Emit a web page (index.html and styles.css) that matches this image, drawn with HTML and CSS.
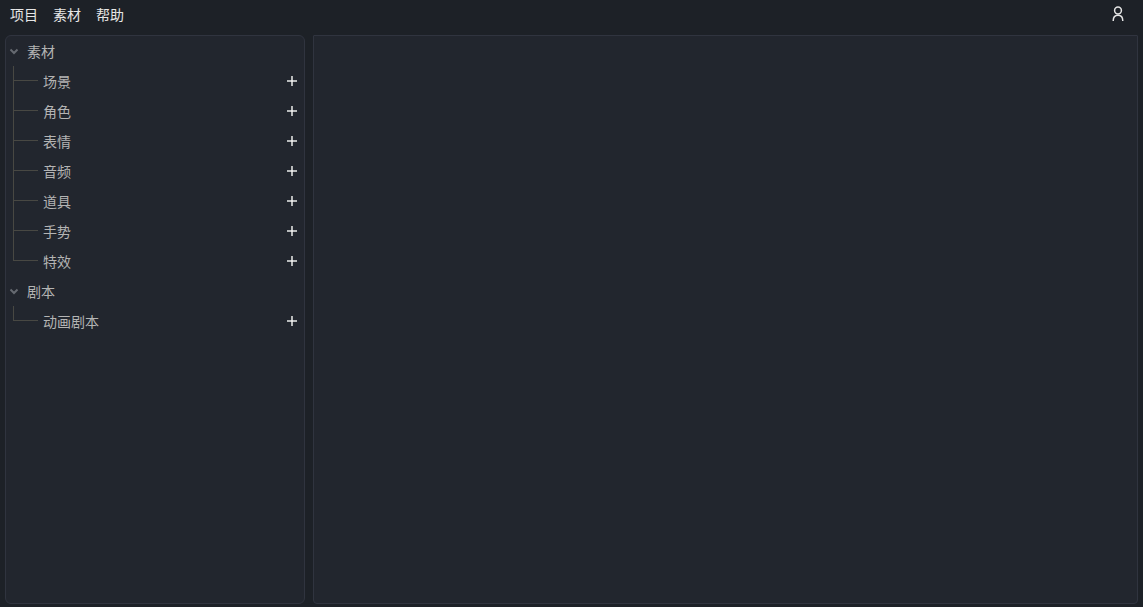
FILE: index.html
```
<!DOCTYPE html>
<html lang="zh-CN">
<head>
  <meta charset="UTF-8" />
  <meta name="viewport" content="width=device-width, initial-scale=1" />
  <title>动画剧本</title>
  <link rel="stylesheet" href="styles.css">
</head>
<body>

  <header class="topbar">
    <nav class="menu">
      <button type="button">项目</button>
      <button type="button">素材</button>
      <button type="button">帮助</button>
    </nav>
    <button type="button" class="user-btn" aria-label="用户">
      <svg width="14" height="16" viewBox="0 0 14 16" fill="none" stroke="currentColor" stroke-width="1.5">
        <circle cx="7" cy="4.5" r="3.4" />
        <path d="M2.200 15c0-3.800 1.800-5.700 4.800-5.700s4.800 1.900 4.800 5.700" />
      </svg>
    </button>
  </header>

  <div class="workspace">
    <aside class="sidebar">
      <section>
        <button type="button" class="group-title">
          <svg class="arrow" width="10" height="8" viewBox="0 0 10 8"><path d="M1.500 2.500L5 6l3.500-3.500" /></svg>
          素材
        </button>
        <ul class="tree">
          <li><span>场景</span><button type="button" class="add-btn" aria-label="添加场景"></button></li>
          <li><span>角色</span><button type="button" class="add-btn" aria-label="添加角色"></button></li>
          <li><span>表情</span><button type="button" class="add-btn" aria-label="添加表情"></button></li>
          <li><span>音频</span><button type="button" class="add-btn" aria-label="添加音频"></button></li>
          <li><span>道具</span><button type="button" class="add-btn" aria-label="添加道具"></button></li>
          <li><span>手势</span><button type="button" class="add-btn" aria-label="添加手势"></button></li>
          <li><span>特效</span><button type="button" class="add-btn" aria-label="添加特效"></button></li>
        </ul>
      </section>
      <section>
        <button type="button" class="group-title">
          <svg class="arrow" width="10" height="8" viewBox="0 0 10 8"><path d="M1.500 2.500L5 6l3.500-3.500" /></svg>
          剧本
        </button>
        <ul class="tree">
          <li><span>动画剧本</span><button type="button" class="add-btn" aria-label="添加动画剧本"></button></li>
        </ul>
      </section>
    </aside>
    <main class="canvas"></main>
  </div>

</body>
</html>
```
FILE: styles.css
```
*, *::before, *::after { box-sizing: border-box; }
body {
  margin: 0;
  height: 100vh;
  display: flex;
  flex-direction: column;
  background: #1d2127;
  color: #e6e6e6;
  font-family: "Noto Sans CJK SC", sans-serif;
  font-size: 14px;
  line-height: 20px;
}
button {
  padding: 0;
  border: none;
  background: none;
  color: inherit;
  font: inherit;
  cursor: pointer;
}

.topbar {
  display: flex;
  justify-content: space-between;
  align-items: center;
  height: 35px;
  padding: 0 18px 7px 10px;
}
.menu { display: flex; gap: 15px; }
.user-btn { display: flex; }

.workspace {
  flex: 1;
  display: flex;
  gap: 8px;
  min-height: 0;
  padding: 0 5px 3px;
}
.sidebar, .canvas {
  background: #22262e;
  border: 1px solid #30343f;
}
.sidebar {
  flex: 0 0 300px;
  border-radius: 6px;
  color: #b4b4b4;
  overflow: auto;
}
.canvas {
  flex: 1;
  border-radius: 1px 1px 4px 4px;
}

.group-title {
  display: flex;
  align-items: center;
  gap: 8px;
  width: 100%;
  height: 30px;
  padding-left: 3px;
}
.arrow {
  fill: none;
  stroke: #666a71;
  stroke-width: 2;
}

.tree { list-style: none; margin: 0; padding: 0 7px; }
.tree li {
  position: relative;
  display: flex;
  justify-content: space-between;
  align-items: center;
  height: 30px;
  padding-left: 30px;
}

/* connector lines */
.tree li::before {
  content: "";
  position: absolute;
  left: 0;
  top: 0;
  width: 25px;
  height: 15px;
  border-left: 1px solid #484843;
  border-bottom: 1px solid #484843;
}
.tree li:not(:last-child)::after {
  content: "";
  position: absolute;
  left: 0;
  top: 0;
  width: 1px;
  height: 30px;
  background: #484843;
}

/* plus sign */
.add-btn {
  width: 10px;
  height: 10px;
  background:
    linear-gradient(#e6e6e6, #e6e6e6) center / 2px 2px no-repeat,
    linear-gradient(#b8babb, #b8babb) center / 10px 2px no-repeat,
    linear-gradient(#b8babb, #b8babb) center / 2px 10px no-repeat;
}
```
